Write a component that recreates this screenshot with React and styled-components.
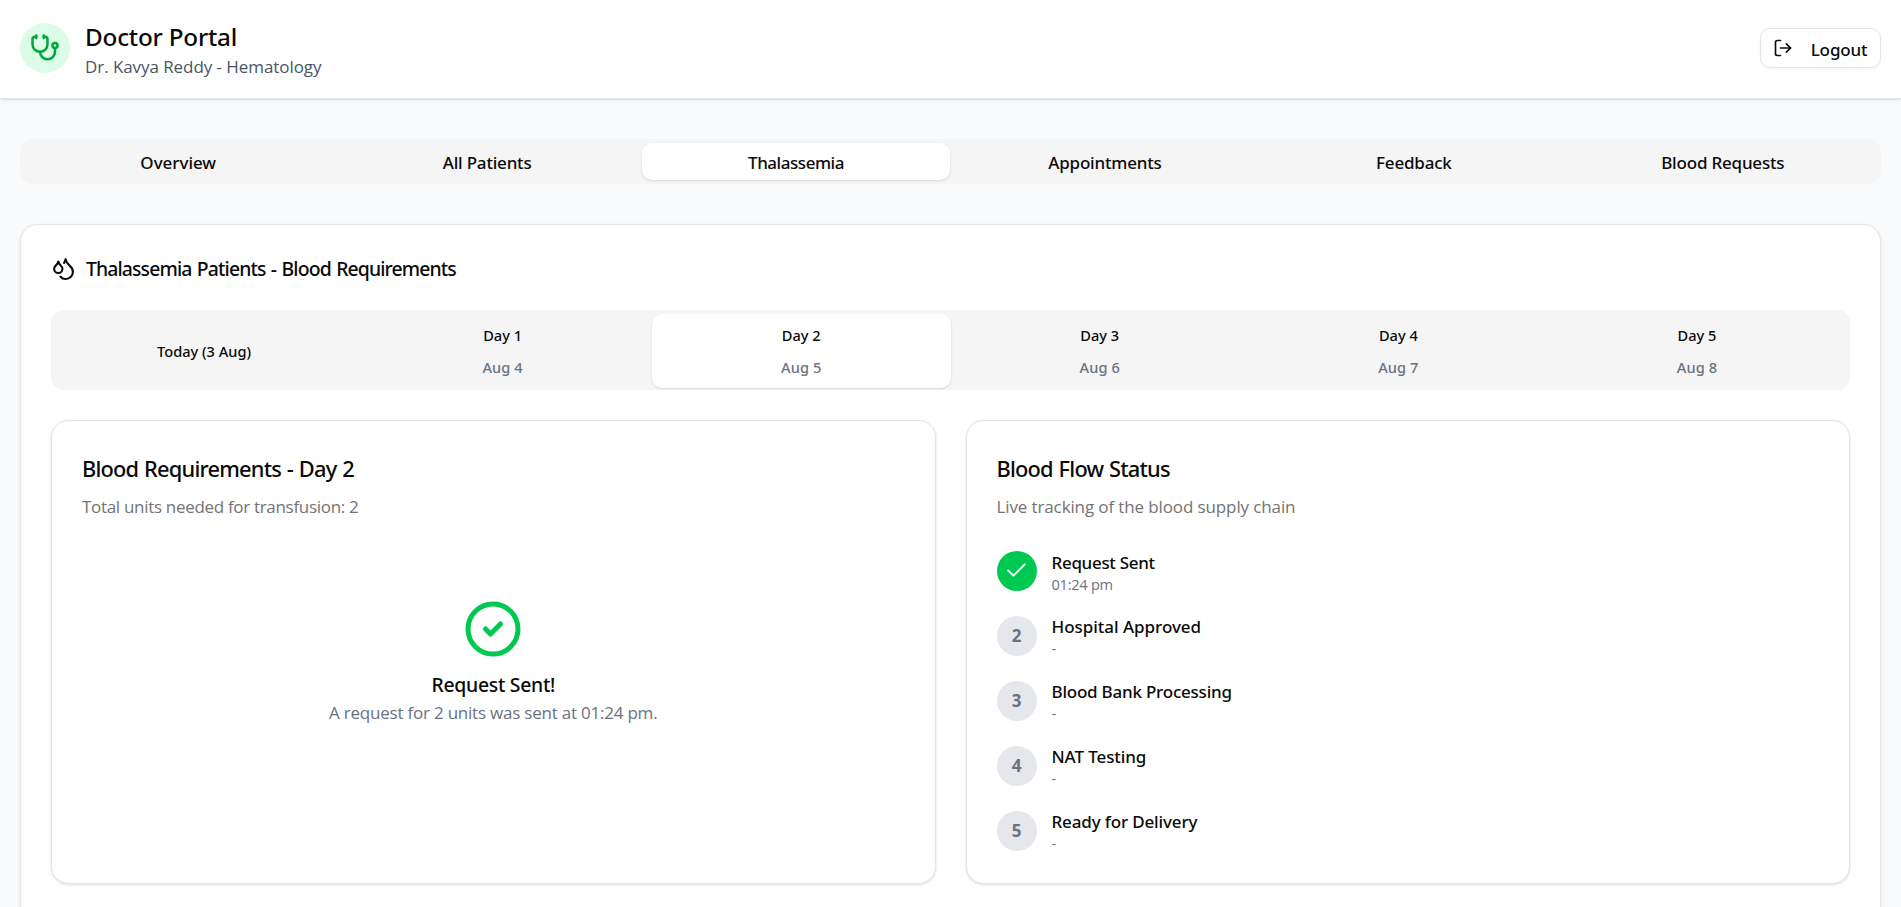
import React, { useState } from "react";
import styled, { createGlobalStyle } from "styled-components";
import { Stethoscope, LogOut, Droplets, CircleCheck, Check } from "lucide-react";

const GlobalStyle = createGlobalStyle`
  * {
    box-sizing: border-box;
  }

  body {
    margin: 0;
    height: 100vh;
    overflow: hidden;
    background: #f9fafb;
    color: #0a0a0a;
    font-family: "Segoe UI", "Noto Sans", "Open Sans", sans-serif;
    font-size: 17px;
    line-height: 25px;
  }

  button {
    font: inherit;
    color: inherit;
    cursor: pointer;
  }

  h1, h2, h3, p {
    margin: 0;
  }
`;

const Header = styled.header`
  display: flex;
  align-items: center;
  justify-content: space-between;
  height: 99px;
  padding: 0 20px 2px;
  background: #fff;
  border-bottom: 1px solid #e5e5e5;
  box-shadow: 0 1px 3px rgba(0, 0, 0, 0.1), 0 1px 2px -1px rgba(0, 0, 0, 0.1);
`;

const Brand = styled.div`
  display: flex;
  align-items: center;
  gap: 15px;
`;

const Avatar = styled.div`
  display: flex;
  align-items: center;
  justify-content: center;
  width: 50px;
  height: 50px;
  border-radius: 50%;
  background: #dbfce7;
  color: #00a63e;
`;

const PortalName = styled.h1`
  padding-top: 3px;
  font-size: 24.25px;
  font-weight: 500;
  line-height: 34px;
  letter-spacing: -0.2px;
`;

const DoctorName = styled.p`
  color: #4a5565;
  font-family: "Segoe UI", "Open Sans", sans-serif;
  letter-spacing: -0.07px;
`;

const LogoutButton = styled.button`
  display: flex;
  align-items: center;
  gap: 17.5px;
  height: 40px;
  padding: 0 12.5px;
  border: 1px solid #e5e5e5;
  border-radius: 10px;
  background: #fff;
  box-shadow: 0 1px 2px rgba(0, 0, 0, 0.05);
  font-weight: 500;

  span {
    padding-top: 2px;
    letter-spacing: -0.12px;
  }
`;

const Main = styled.main`
  padding: 40px 20px;
`;

const TabList = styled.div`
  display: grid;
  grid-template-columns: repeat(6, 1fr);
  height: ${(props) => (props.$days ? "80px" : "45px")};
  padding: ${(props) => (props.$days ? "4px 3.75px 2px" : "4px 3.75px")};
  border-radius: 12.5px;
  background: #f5f5f5;
`;

const Tab = styled.button`
  display: flex;
  flex-direction: column;
  align-items: center;
  justify-content: center;
  padding: 2px 0 0;
  border: 0;
  border-radius: 10px;
  background: ${(props) => (props.$active ? "#fff" : "transparent")};
  box-shadow: ${(props) =>
    props.$active
      ? "0 1px 3px rgba(0, 0, 0, 0.1), 0 1px 2px -1px rgba(0, 0, 0, 0.1)"
      : "none"};
  font-weight: 500;
  letter-spacing: ${(props) => props.$tracking || 0}px;
`;

const DayTab = styled(Tab)`
  gap: 12px;
  padding: 0;
  font-size: 14.6px;
  line-height: 20px;
`;

const DayDate = styled.span`
  color: #6a7282;
  letter-spacing: 0.1px;
`;

const Card = styled.section`
  border: 1px solid #e5e5e5;
  border-radius: 17.5px;
  background: #fff;
  box-shadow: 0 1px 3px rgba(0, 0, 0, 0.1), 0 1px 2px -1px rgba(0, 0, 0, 0.1);
`;

const PatientsCard = styled(Card)`
  margin-top: 40px;
  padding: 31px 30px 60px;
`;

const PatientsTitle = styled.h2`
  display: flex;
  align-items: center;
  gap: 10px;
  margin-bottom: 29px;
  font-size: 19.4px;
  font-weight: 500;
  letter-spacing: -0.88px;
  word-spacing: 1.2px;
`;

const Columns = styled.div`
  display: grid;
  grid-template-columns: 1fr 1fr;
  gap: 30px;
  margin-top: 30px;
`;

const Panel = styled(Card)`
  height: 464px;
  padding: 31px 30px 29px;
`;

const PanelTitle = styled.h3`
  font-size: 21.8px;
  font-weight: 500;
  line-height: 33px;
  letter-spacing: -0.79px;
  word-spacing: 0.9px;
`;

const PanelText = styled.p`
  margin-top: 9px;
  padding-bottom: 1px;
  color: #737373;
  font-family: "Segoe UI", "Open Sans", sans-serif;
  letter-spacing: ${(props) => props.$tracking}px;
`;

const Confirmation = styled.div`
  display: flex;
  flex-direction: column;
  align-items: center;
  padding-top: 79px;

  svg {
    color: #00c951;
  }
`;

const ConfirmationTitle = styled.p`
  margin-top: 11px;
  font-size: 19.4px;
  font-weight: 500;
  line-height: 30px;
  letter-spacing: -0.28px;
`;

const ConfirmationText = styled.p`
  color: #6a7282;
  font-family: "Segoe UI", "Open Sans", sans-serif;
  letter-spacing: -0.22px;
`;

const Steps = styled.div`
  display: flex;
  flex-direction: column;
  gap: 20px;
  margin-top: 28px;
`;

const Step = styled.div`
  display: flex;
  align-items: center;
  gap: 15px;
  height: 45px;
`;

const StepBadge = styled.div`
  display: flex;
  align-items: center;
  justify-content: center;
  width: 40px;
  height: 40px;
  border-radius: 50%;
  background: ${(props) => (props.$done ? "#00c951" : "#e5e7eb")};
  color: ${(props) => (props.$done ? "#fff" : "#6a7282")};
  font-weight: 700;
`;

const StepInfo = styled.div`
  padding-top: ${(props) => (props.$done ? "2px" : "0")};
`;

const StepLabel = styled.p`
  padding-top: 2px;
  font-weight: 500;
  line-height: 23px;
  letter-spacing: ${(props) => props.$tracking}px;
`;

const StepTime = styled.p`
  color: #6a7282;
  font-family: "Segoe UI", "Open Sans", sans-serif;
  font-size: 14.6px;
  line-height: 20px;
  letter-spacing: -0.27px;
`;

const tabs = [
  { name: "Overview", tracking: -0.03 },
  { name: "All Patients", tracking: -0.2 },
  { name: "Thalassemia", tracking: -0.45 },
  { name: "Appointments", tracking: -0.2 },
  { name: "Feedback", tracking: -0.2 },
  { name: "Blood Requests", tracking: -0.2 },
];

const days = [
  { name: "Today (3 Aug)" },
  { name: "Day 1", date: "Aug 4" },
  { name: "Day 2", date: "Aug 5" },
  { name: "Day 3", date: "Aug 6" },
  { name: "Day 4", date: "Aug 7" },
  { name: "Day 5", date: "Aug 8" },
];

const steps = [
  { label: "Request Sent", time: "01:24 pm", done: true, tracking: -0.31 },
  { label: "Hospital Approved", tracking: -0.03 },
  { label: "Blood Bank Processing", tracking: -0.22 },
  { label: "NAT Testing", tracking: -0.1 },
  { label: "Ready for Delivery", tracking: -0.15 },
];

function FlowStatus() {
  return (
    <Panel>
      <PanelTitle>Blood Flow Status</PanelTitle>
      <PanelText $tracking={-0.12}>Live tracking of the blood supply chain</PanelText>
      <Steps>
        {steps.map((step, i) => (
          <Step key={step.label}>
            <StepBadge $done={step.done}>
              {step.done ? <Check size={25} strokeWidth={1.8} /> : i + 1}
            </StepBadge>
            <StepInfo $done={step.done}>
              <StepLabel $tracking={step.tracking}>{step.label}</StepLabel>
              <StepTime>{step.time || "-"}</StepTime>
            </StepInfo>
          </Step>
        ))}
      </Steps>
    </Panel>
  );
}

function App() {
  const [tab, setTab] = useState("Thalassemia");
  const [day, setDay] = useState("Day 2");

  return (
    <>
      <GlobalStyle />
      <Header>
        <Brand>
          <Avatar>
            <Stethoscope size={30} />
          </Avatar>
          <div>
            <PortalName>Doctor Portal</PortalName>
            <DoctorName>Dr. Kavya Reddy - Hematology</DoctorName>
          </div>
        </Brand>
        <LogoutButton>
          <LogOut size={20} />
          <span>Logout</span>
        </LogoutButton>
      </Header>
      <Main>
        <TabList>
          {tabs.map((t) => (
            <Tab
              key={t.name}
              $active={t.name === tab}
              $tracking={t.tracking}
              onClick={() => setTab(t.name)}
            >
              {t.name}
            </Tab>
          ))}
        </TabList>
        <PatientsCard>
          <PatientsTitle>
            <Droplets size={25} />
            Thalassemia Patients - Blood Requirements
          </PatientsTitle>
          <TabList $days>
            {days.map((d) => (
              <DayTab key={d.name} $active={d.name === day} onClick={() => setDay(d.name)}>
                <span>{d.name}</span>
                {d.date && <DayDate>{d.date}</DayDate>}
              </DayTab>
            ))}
          </TabList>
          <Columns>
            <Panel>
              <PanelTitle>Blood Requirements - Day 2</PanelTitle>
              <PanelText $tracking={-0.31}>Total units needed for transfusion: 2</PanelText>
              <Confirmation>
                <CircleCheck size={60} />
                <ConfirmationTitle>Request Sent!</ConfirmationTitle>
                <ConfirmationText>A request for 2 units was sent at 01:24 pm.</ConfirmationText>
              </Confirmation>
            </Panel>
            <FlowStatus />
          </Columns>
        </PatientsCard>
      </Main>
    </>
  );
}

export default App;
